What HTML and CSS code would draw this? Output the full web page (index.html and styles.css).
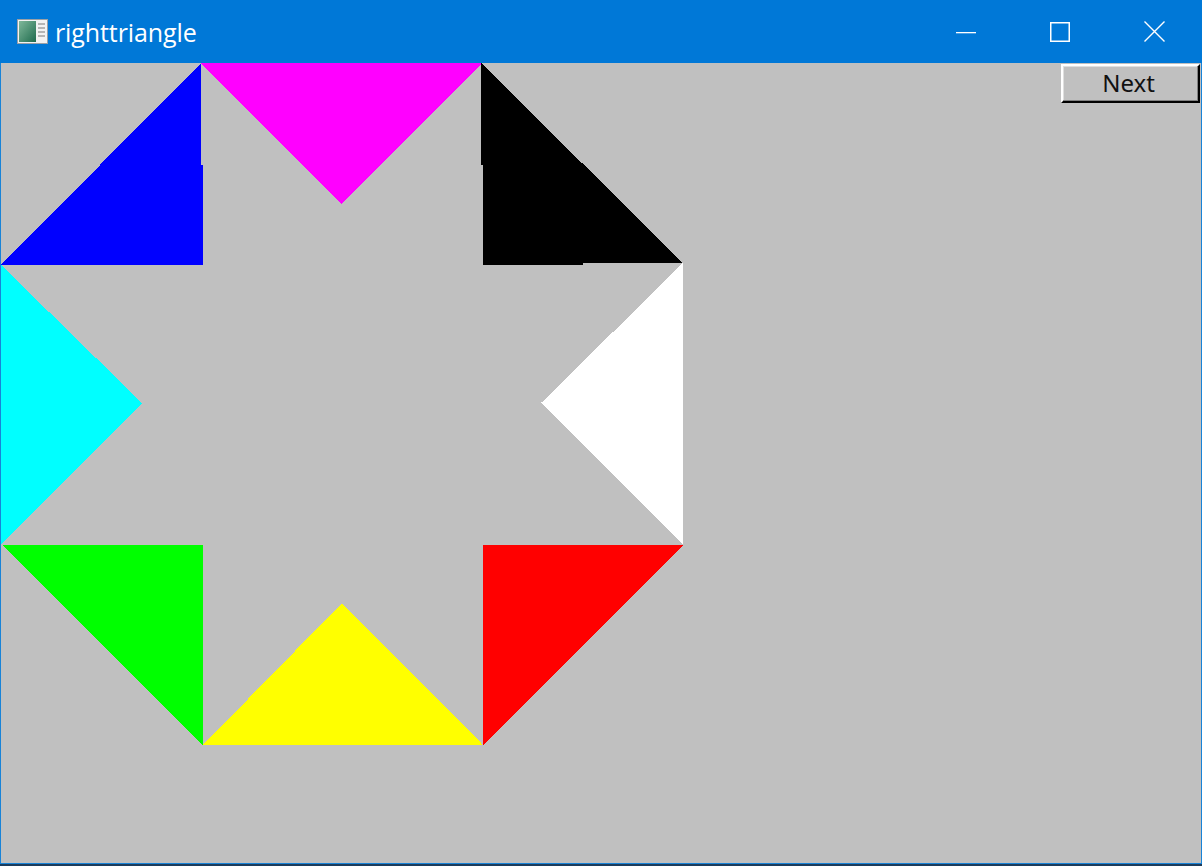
FILE: index.html
```html
<!DOCTYPE html>
<html>
<head>
<meta charset="utf-8">
<link rel="stylesheet" href="styles.css">
</head>
<body>
<div class="window">
  <div class="titlebar">
    <div class="title-left">
      <svg class="app-icon" width="31" height="25" viewBox="0 0 31 25">
        <rect x="0.5" y="0.5" width="30" height="24" fill="#f2f2f2" stroke="#9aa0a6"/>
        <defs>
          <linearGradient id="g" x1="0" y1="0" x2="1" y2="1">
            <stop offset="0" stop-color="#7fb89a"/>
            <stop offset="1" stop-color="#1f6b4e"/>
          </linearGradient>
        </defs>
        <rect x="2" y="2" width="17" height="21" fill="url(#g)"/>
        <rect x="21" y="4" width="7" height="2" fill="#b5b5b5"/>
        <rect x="21" y="8" width="7" height="2" fill="#b5b5b5"/>
        <rect x="21" y="12" width="7" height="2" fill="#b5b5b5"/>
        <rect x="21" y="16" width="7" height="2" fill="#b5b5b5"/>
      </svg>
      <span class="title">righttriangle</span>
    </div>
    <div class="controls">
      <div class="ctl">
        <svg width="20" height="20" viewBox="0 0 20 20"><rect x="0" y="10" width="20" height="1.3" fill="#fff"/></svg>
      </div>
      <div class="ctl">
        <svg width="20" height="20" viewBox="0 0 20 20"><rect x="0.75" y="0.75" width="18.5" height="18.5" fill="none" stroke="#fff" stroke-width="1.5"/></svg>
      </div>
      <div class="ctl">
        <svg width="21" height="21" viewBox="0 0 21 21"><path d="M0.5 0.5 L20.5 20.5 M20.5 0.5 L0.5 20.5" stroke="#fff" stroke-width="1.4"/></svg>
      </div>
    </div>
  </div>
  <div class="client">
    <svg class="canvas" width="1200" height="800" viewBox="0 0 1200 800" shape-rendering="crispEdges">
      <polygon points="199,0 481,0 341,141" fill="#ff00ff"/>
      <polygon points="0,202 200,0 200,102 202,102 202,202" fill="#0000ff"/>
      <polygon points="480,0 682,200 582,200 582,202 482,202 482,102 480,102" fill="#000000"/>
      <polygon points="0,202 141,340 0,482" fill="#00ffff"/>
      <polygon points="682,200 682,482 540,340" fill="#ffffff"/>
      <polygon points="1,482 202,482 202,682" fill="#00ff00"/>
      <polygon points="202,682 341,540 482,682" fill="#ffff00"/>
      <polygon points="482,482 682,482 482,682" fill="#ff0000"/>
    </svg>
    <button class="next-btn">Next</button>
  </div>
</div>
</body>
</html>
```

FILE: styles.css
```css
html, body {
  margin: 0;
  padding: 0;
  background: #1c3c5c;
}
body {
  width: 1202px;
  height: 866px;
  overflow: hidden;
}
.window {
  width: 1202px;
  height: 864px;
  box-sizing: border-box;
  border: 1px solid #1883d7;
  border-top: none;
  display: flex;
  flex-direction: column;
  background: #c0c0c0;
}
.titlebar {
  height: 63px;
  flex: none;
  background: #0078d7;
  display: flex;
  align-items: center;
  justify-content: space-between;
  margin: 0 -1px;
  padding: 0 1px;
}
.title-left {
  display: flex;
  align-items: center;
  padding-left: 16px;
  gap: 7px;
}
.app-icon {
  display: block;
}
.title {
  color: #ffffff;
  font-family: "Open Sans", "Noto Sans", sans-serif;
  font-size: 25px;
  letter-spacing: -0.1px;
  margin-top: 1px;
}
.controls {
  display: flex;
  height: 100%;
}
.ctl {
  width: 94px;
  display: flex;
  align-items: center;
  justify-content: center;
}
.ctl svg {
  display: block;
}
.client {
  position: relative;
  flex: 1;
  background: #c0c0c0;
}
.canvas {
  position: absolute;
  left: 0;
  top: 0;
  display: block;
}
.next-btn {
  position: absolute;
  right: 1px;
  top: 1px;
  width: 139px;
  height: 39px;
  margin: 0;
  padding: 0 4px 2px 0;
  background: #c0c0c0;
  border-style: solid;
  border-width: 2px;
  border-color: #ffffff #000000 #000000 #ffffff;
  box-shadow: inset -1px -1px 0 #808080, inset 1px 1px 0 #dfdfdf;
  font-family: "Noto Sans", "Open Sans", sans-serif;
  font-size: 24px;
  color: #111;
  cursor: default;
}
```
